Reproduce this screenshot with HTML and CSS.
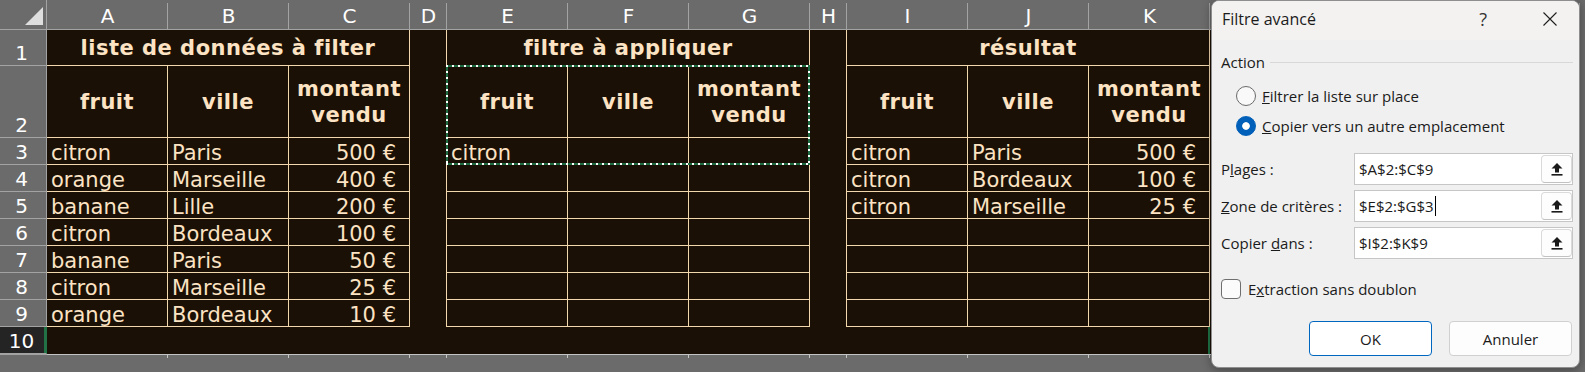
FILE: index.html
```html
<!DOCTYPE html>
<html lang="fr">
<head>
<meta charset="utf-8">
<title>Filtre avancé</title>
<link rel="stylesheet" href="styles.css">
</head>
<body>
<div class="sheet">
  <div class="corner"><svg width="18" height="18" viewBox="0 0 18 18"><polygon points="18,0 18,18 0,18" fill="#dedede"/></svg></div>
  <div class="ch">A</div><div class="ch">B</div><div class="ch">C</div><div class="ch">D</div>
  <div class="ch">E</div><div class="ch">F</div><div class="ch">G</div><div class="ch">H</div>
  <div class="ch">I</div><div class="ch">J</div><div class="ch">K</div><div class="ch">L</div>

  <div class="rh">1</div>
  <div class="c b hd span3">liste de données à filter</div>
  <div class="c vsep"></div>
  <div class="c b hd span3">filtre à appliquer</div>
  <div class="c vsep"></div>
  <div class="c b hd span3">résultat</div>
  <div class="c"></div>

  <div class="rh">2</div>
  <div class="c b hd">fruit</div><div class="c b hd">ville</div><div class="c b hd">montant vendu</div>
  <div class="c vsep"></div>
  <div class="c b hd">fruit</div><div class="c b hd">ville</div><div class="c b hd">montant vendu</div>
  <div class="c vsep"></div>
  <div class="c b hd">fruit</div><div class="c b hd">ville</div><div class="c b hd">montant vendu</div>
  <div class="c"></div>

  <div class="rh">3</div>
  <div class="c b">citron</div><div class="c b">Paris</div><div class="c b num">500&nbsp;€</div>
  <div class="c vsep"></div>
  <div class="c b">citron</div><div class="c b"></div><div class="c b"></div>
  <div class="c vsep"></div>
  <div class="c b">citron</div><div class="c b">Paris</div><div class="c b num">500&nbsp;€</div>
  <div class="c"></div>

  <div class="rh">4</div>
  <div class="c b">orange</div><div class="c b">Marseille</div><div class="c b num">400&nbsp;€</div>
  <div class="c vsep"></div>
  <div class="c b"></div><div class="c b"></div><div class="c b"></div>
  <div class="c vsep"></div>
  <div class="c b">citron</div><div class="c b">Bordeaux</div><div class="c b num">100&nbsp;€</div>
  <div class="c"></div>

  <div class="rh">5</div>
  <div class="c b">banane</div><div class="c b">Lille</div><div class="c b num">200&nbsp;€</div>
  <div class="c vsep"></div>
  <div class="c b"></div><div class="c b"></div><div class="c b"></div>
  <div class="c vsep"></div>
  <div class="c b">citron</div><div class="c b">Marseille</div><div class="c b num">25&nbsp;€</div>
  <div class="c"></div>

  <div class="rh">6</div>
  <div class="c b">citron</div><div class="c b">Bordeaux</div><div class="c b num">100&nbsp;€</div>
  <div class="c vsep"></div>
  <div class="c b"></div><div class="c b"></div><div class="c b"></div>
  <div class="c vsep"></div>
  <div class="c b"></div><div class="c b"></div><div class="c b"></div>
  <div class="c"></div>

  <div class="rh">7</div>
  <div class="c b">banane</div><div class="c b">Paris</div><div class="c b num">50&nbsp;€</div>
  <div class="c vsep"></div>
  <div class="c b"></div><div class="c b"></div><div class="c b"></div>
  <div class="c vsep"></div>
  <div class="c b"></div><div class="c b"></div><div class="c b"></div>
  <div class="c"></div>

  <div class="rh">8</div>
  <div class="c b">citron</div><div class="c b">Marseille</div><div class="c b num">25&nbsp;€</div>
  <div class="c vsep"></div>
  <div class="c b"></div><div class="c b"></div><div class="c b"></div>
  <div class="c vsep"></div>
  <div class="c b"></div><div class="c b"></div><div class="c b"></div>
  <div class="c"></div>

  <div class="rh">9</div>
  <div class="c b">orange</div><div class="c b">Bordeaux</div><div class="c b num">10&nbsp;€</div>
  <div class="c vsep"></div>
  <div class="c b"></div><div class="c b"></div><div class="c b"></div>
  <div class="c vsep"></div>
  <div class="c b"></div><div class="c b"></div><div class="c b"></div>
  <div class="c"></div>

  <div class="rh sel">10</div>
  <div class="c"></div><div class="c"></div><div class="c"></div><div class="c"></div>
  <div class="c"></div><div class="c"></div><div class="c"></div><div class="c"></div>
  <div class="c"></div><div class="c"></div><div class="c selr"></div><div class="c"></div>

  <div class="ft ft0"></div>
  <div class="ft"></div><div class="ft"></div><div class="ft"></div><div class="ft"></div>
  <div class="ft"></div><div class="ft"></div><div class="ft"></div><div class="ft"></div>
  <div class="ft"></div><div class="ft"></div><div class="ft"></div><div class="ft"></div>

  <div class="marq"></div>
</div>

<div class="dlg">
  <div class="dlg-title">
    <span class="dlg-name">Filtre avancé</span>
    <span class="dlg-help">?</span>
    <span class="dlg-close"><svg width="14" height="14" viewBox="0 0 14 14"><path d="M0.5 0.5 L13.5 13.5 M13.5 0.5 L0.5 13.5" stroke="#1f1f1f" stroke-width="1.1" fill="none"/></svg></span>
  </div>
  <div class="dlg-body">
    <div class="grp"><span>Action</span><span class="grp-line"></span></div>
    <div class="radios">
      <div class="radio"><span class="rb"></span><span><u>F</u>iltrer la liste sur place</span></div>
      <div class="radio"><span class="rb on"></span><span><u>C</u>opier vers un autre emplacement</span></div>
    </div>
    <div class="fields">
      <div class="field">
        <span class="flabel">P<u>l</u>ages :</span>
        <div class="finput"><span class="fval">$A$2:$C$9</span><span class="fbtn"><svg width="12" height="13" viewBox="0 0 12 13"><polygon points="6,0 11.5,5.5 8,5.5 8,9.5 4,9.5 4,5.5 0.5,5.5" fill="#1a1a1a"/><rect x="0.5" y="11" width="11" height="1.6" fill="#1a1a1a"/></svg></span></div>
      </div>
      <div class="field">
        <span class="flabel"><u>Z</u>one de critères :</span>
        <div class="finput"><span class="fval">$E$2:$G$3<span class="caret"></span></span><span class="fbtn"><svg width="12" height="13" viewBox="0 0 12 13"><polygon points="6,0 11.5,5.5 8,5.5 8,9.5 4,9.5 4,5.5 0.5,5.5" fill="#1a1a1a"/><rect x="0.5" y="11" width="11" height="1.6" fill="#1a1a1a"/></svg></span></div>
      </div>
      <div class="field">
        <span class="flabel">Copier <u>d</u>ans :</span>
        <div class="finput"><span class="fval">$I$2:$K$9</span><span class="fbtn"><svg width="12" height="13" viewBox="0 0 12 13"><polygon points="6,0 11.5,5.5 8,5.5 8,9.5 4,9.5 4,5.5 0.5,5.5" fill="#1a1a1a"/><rect x="0.5" y="11" width="11" height="1.6" fill="#1a1a1a"/></svg></span></div>
      </div>
    </div>
    <div class="chk"><span class="cb"></span><span>E<u>x</u>traction sans doublon</span></div>
    <div class="btns"><button class="btn def">OK</button><button class="btn">Annuler</button></div>
  </div>
</div>
</body>
</html>
```

FILE: styles.css
```css
html, body {
  margin: 0;
  padding: 0;
}
body {
  width: 1585px;
  height: 372px;
  overflow: hidden;
  background: #6b6b6b;
  font-family: "DejaVu Sans", Verdana, sans-serif;
  position: relative;
}

.sheet {
  position: relative;
  display: grid;
  width: 1580px;
  height: 372px;
  grid-template-columns: 47px 121px 121px 121px 37px 121px 121px 121px 37px 121px 121px 121px 1fr;
  grid-template-rows: 30px 36px 72px repeat(8, 27px) 1fr;
}

.corner {
  background: #6b6b6b;
  border-right: 1px solid #a3a3a3;
  border-bottom: 1px solid #a3a3a3;
  box-sizing: border-box;
  display: flex;
  justify-content: flex-end;
  align-items: flex-end;
  padding: 0 3px 4px 0;
}

.ch {
  background: #6b6b6b linear-gradient(#a3a3a3, #a3a3a3) right bottom / 1px calc(100% - 3px) no-repeat;
  border-bottom: 1px solid #a3a3a3;
  box-sizing: border-box;
  color: #ffffff;
  font-size: 20px;
  display: flex;
  align-items: center;
  justify-content: center;
  padding-top: 2px;
}

.rh {
  background: #6b6b6b;
  border-right: 1px solid #a3a3a3;
  border-bottom: 1px solid #a3a3a3;
  box-sizing: border-box;
  color: #ffffff;
  font-size: 20px;
  line-height: 24px;
  display: flex;
  align-items: flex-end;
  justify-content: center;
  padding-right: 3px;
}
.rh.sel {
  background: #242424;
  border-right-color: #217346;
  box-shadow: inset -2px 0 0 #217346;
}

.c {
  background: #1b1006;
  color: #fbe3c3;
  font-size: 21px;
  line-height: 22px;
  display: flex;
  align-items: flex-end;
  padding: 0 4px;
  white-space: nowrap;
  overflow: hidden;
  box-sizing: border-box;
  min-width: 0;
}
.b {
  border-right: 1px solid #f3d7ad;
  border-bottom: 1px solid #f3d7ad;
}
.vsep {
  border-right: 1px solid #f3d7ad;
}
.num {
  justify-content: flex-end;
  padding-right: 13px;
}
.hd {
  font-weight: bold;
  letter-spacing: 0.5px;
  align-items: center;
  justify-content: center;
  text-align: center;
  white-space: normal;
  line-height: 26px;
  padding: 0 2px;
}
.span3 {
  grid-column: span 3;
}
.selr {
  box-shadow: inset -2px 0 0 #217346;
}

.ft {
  background: #6b6b6b linear-gradient(#c4c4c4, #c4c4c4) right top / 1px 3px no-repeat;
  border-top: 1px solid #c4c4c4;
}
.ft0 {
  background: #6b6b6b;
  border-top-color: #a3a3a3;
}

.marq {
  position: absolute;
  left: 446px;
  top: 65px;
  width: 364px;
  height: 100px;
  pointer-events: none;
  background:
    repeating-linear-gradient(90deg, #ffffff 0 2px, #1d6b40 2px 6px) left top / 100% 2px no-repeat,
    repeating-linear-gradient(90deg, #ffffff 0 2px, #1d6b40 2px 6px) left bottom / 100% 2px no-repeat,
    repeating-linear-gradient(180deg, #ffffff 0 2px, #1d6b40 2px 6px) left top / 2px 100% no-repeat,
    repeating-linear-gradient(180deg, #ffffff 0 2px, #1d6b40 2px 6px) right top / 2px 100% no-repeat;
}

/* Dialog */
.dlg {
  position: absolute;
  left: 1211px;
  top: 0;
  width: 369px;
  height: 368px;
  box-sizing: border-box;
  border: 1px solid #8e8e8e;
  border-radius: 8px;
  background: #f0f0f0;
  overflow: hidden;
  font-family: "Open Sans", "Noto Sans", sans-serif;
  font-size: 15px;
  color: #1b1b1b;
  box-shadow: 0 2px 10px rgba(0, 0, 0, 0.35);
}
.dlg-title {
  height: 39px;
  box-sizing: border-box;
  background: #f3f2f1;
  display: flex;
  align-items: center;
  padding: 0 22px 4px 10px;
}
.dlg-name {
  flex: 1;
  font-size: 16px;
  line-height: 20px;
}
.dlg-help {
  font-size: 18px;
  line-height: 20px;
  color: #333333;
  margin-right: 56px;
}
.dlg-close {
  display: flex;
  width: 14px;
  height: 14px;
}
.dlg-body {
  padding: 12px 6px 0 9px;
}
.grp {
  display: flex;
  align-items: center;
  height: 20px;
  line-height: 20px;
}
.grp-line {
  flex: 1;
  height: 1px;
  background: #d8d8d8;
  margin-left: 5px;
}
.radios {
  margin-top: 9px;
  padding-left: 15px;
}
.radio {
  display: flex;
  align-items: center;
  height: 30px;
  line-height: 20px;
}
.rb {
  flex: none;
  width: 20px;
  height: 20px;
  box-sizing: border-box;
  border: 1px solid #6a6a6a;
  border-radius: 50%;
  background: #f9f9f9;
  margin-right: 6px;
}
.rb.on {
  border-color: #005fb8;
  background: radial-gradient(circle, #ffffff 0 3.4px, #005fb8 4.2px);
}
.fields {
  margin-top: 12px;
  display: flex;
  flex-direction: column;
  gap: 5px;
}
.field {
  display: flex;
  align-items: center;
  height: 32px;
  line-height: 20px;
}
.flabel {
  flex: none;
  width: 133px;
}
.finput {
  flex: 1;
  height: 32px;
  box-sizing: border-box;
  border: 1px solid #c6c6c6;
  background: #ffffff;
  display: flex;
  align-items: center;
  padding-left: 4px;
}
.fval {
  flex: 1;
  display: flex;
  align-items: center;
}
.caret {
  display: inline-block;
  width: 1px;
  height: 20px;
  background: #000000;
  margin-left: 1px;
}
.fbtn {
  flex: none;
  width: 31px;
  height: 28px;
  box-sizing: border-box;
  border: 1px solid #dadada;
  border-bottom-color: #c2c2c2;
  border-radius: 4px;
  background: #fdfdfd;
  display: flex;
  align-items: center;
  justify-content: center;
}
.chk {
  margin-top: 20px;
  display: flex;
  align-items: center;
  height: 20px;
  line-height: 20px;
}
.cb {
  flex: none;
  width: 20px;
  height: 20px;
  box-sizing: border-box;
  border: 1px solid #6e6e6e;
  border-radius: 4px;
  background: #fbfbfb;
  margin-right: 7px;
}
.btns {
  margin-top: 22px;
  display: flex;
  justify-content: flex-end;
  gap: 17px;
  padding-right: 1px;
}
.btn {
  width: 123px;
  height: 35px;
  box-sizing: border-box;
  border: 1px solid #d0d0d0;
  border-radius: 4px;
  background: #fdfdfd;
  font-family: "Open Sans", "Noto Sans", sans-serif;
  font-size: 15px;
  color: #1b1b1b;
  padding: 0;
}
.btn.def {
  border-color: #0067c0;
  background: #ffffff;
}
```
